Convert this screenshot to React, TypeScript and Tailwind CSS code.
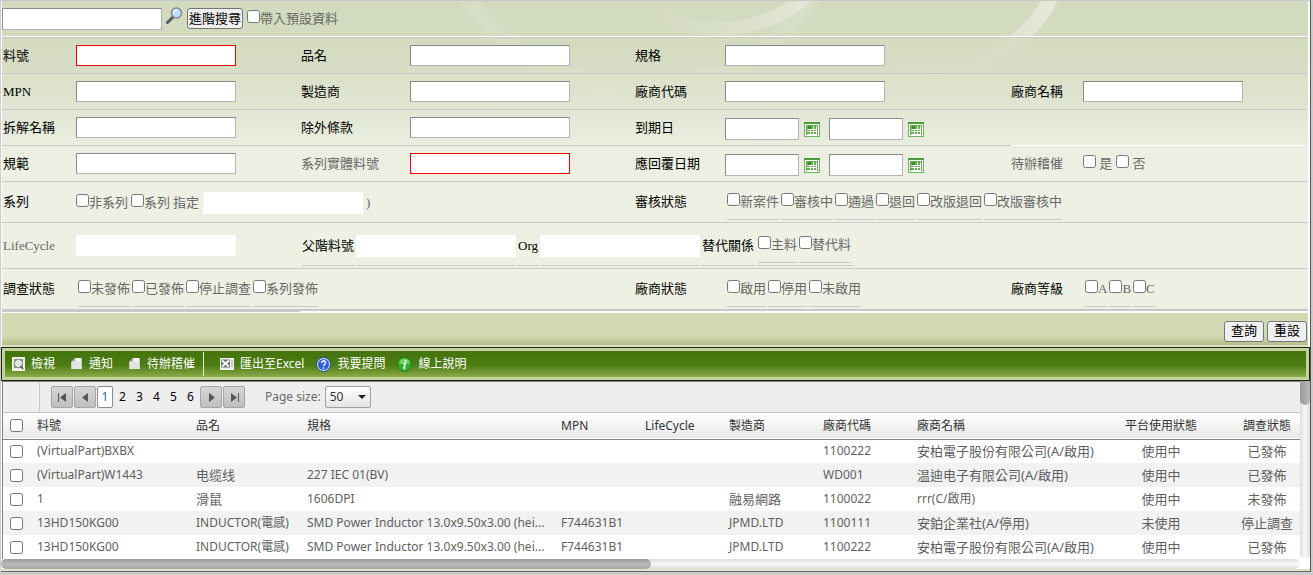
import type { ReactNode } from 'react';

import { clsx } from 'clsx';

const INPUT =
  'border border-t-[#8a8a8a] border-l-[#8a8a8a] border-r-[#b4b4b4] border-b-[#b4b4b4] bg-white px-1 text-[13px] text-black outline-none';
const INPUT_RED = 'border border-[#f00000] bg-white px-1 text-[13px] text-black outline-none';
const INPUT_PLAIN = 'bg-white px-1 text-[13px] text-black outline-none';
const ROW =
  'grid grid-cols-[74px_225fr_109px_225fr_90px_286fr_72px_225fr] items-center border-b border-[#c8c8c8]';
const BUTTON =
  'h-[21px] rounded-[3px] border border-[#767676] bg-[#efefef] px-px text-[13px] leading-4 text-black';

interface LabelProps {
  htmlFor?: string;
  muted?: boolean;
  children: ReactNode;
}

function Label({ htmlFor, muted = false, children }: LabelProps): ReactNode {
  return (
    <label
      htmlFor={htmlFor}
      className={clsx('whitespace-nowrap first:pl-px', muted ? 'text-[#696969]' : 'text-black')}
    >
      {children}
    </label>
  );
}

interface TextFieldProps {
  id: string;
  label: string;
  muted?: boolean;
  required?: boolean;
}

/** Label cell + input cell, two columns of the search grid. */
function TextField({ id, label, muted, required = false }: TextFieldProps): ReactNode {
  return (
    <>
      <Label htmlFor={id} muted={muted}>
        {label}
      </Label>
      <div>
        <input id={id} type="text" className={clsx('block h-[21px] w-40', required ? INPUT_RED : INPUT)} />
      </div>
    </>
  );
}

function CalendarIcon(): ReactNode {
  return (
    <svg viewBox="0 0 16 15" className="h-[15px] w-4" shapeRendering="crispEdges">
      <rect x="0.5" y="0.5" width="15" height="14" fill="#fff" stroke="#6db85c" />
      <rect x="0" y="0" width="16" height="2" fill="#4f9a3c" />
      <rect x="2" y="3" width="12" height="10" fill="#5fb04c" />
      <path
        d="M3 7h10M3 9.500h10M6.500 4v9M9.500 4v9M12.500 4v9M3 12h10"
        stroke="#fff"
        fill="none"
      />
      <rect x="4" y="4" width="3" height="3" fill="#3f8a2e" />
    </svg>
  );
}

function DateRange({ id, label }: { id: string; label: string }): ReactNode {
  return (
    <>
      <Label htmlFor={`${id}-from`}>{label}</Label>
      <div className="flex items-center pt-0.5">
        <input id={`${id}-from`} type="text" className={clsx('h-[22px] w-[74px]', INPUT)} />
        <button type="button" aria-label="calendar" className="mr-[9px] ml-[5px] pt-0.5">
          <CalendarIcon />
        </button>
        <input aria-label={label} type="text" className={clsx('h-[22px] w-[74px]', INPUT)} />
        <button type="button" aria-label="calendar" className="ml-[5px] pt-0.5">
          <CalendarIcon />
        </button>
      </div>
    </>
  );
}

function Check({ children, className }: { children: ReactNode; className?: string }): ReactNode {
  return (
    <label className={clsx('flex items-start leading-[18px] whitespace-nowrap text-[#696969]', className)}>
      <input type="checkbox" className="m-0 size-[13px]" />
      <span>{children}</span>
    </label>
  );
}

function CheckList({ items, className }: { items: string[]; className?: string }): ReactNode {
  return (
    <div className={clsx('flex gap-0.5', className)}>
      {items.map((item) => (
        <Check key={item} className="h-[27px] border-b border-[#c8c8c8]">
          {item}
        </Check>
      ))}
    </div>
  );
}

/** Pale rings behind the header and the first search rows. */
function Swirls(): ReactNode {
  return (
    <svg className="pointer-events-none absolute top-0 left-0 h-[120px] w-full" aria-hidden="true">
      <defs>
        <linearGradient id="fade" x1="0" x2="1">
          <stop offset="0.2" stopColor="#fff" stopOpacity="0" />
          <stop offset="0.6" stopColor="#fff" stopOpacity="0.2" />
          <stop offset="0.95" stopColor="#fff" stopOpacity="0.38" />
        </linearGradient>
      </defs>
      <g fill="none">
        <circle cx="718" cy="-102" r="130" stroke="url(#fade)" strokeWidth="14" />
        <circle cx="933" cy="-62" r="130" stroke="url(#fade)" strokeWidth="15" />
        <circle cx="638" cy="-125" r="212" stroke="#fff" strokeWidth="16" strokeOpacity="0.12" />
      </g>
    </svg>
  );
}

function MagnifierIcon(): ReactNode {
  return (
    <svg viewBox="0 0 17 17" className="size-[17px]">
      <path d="M1.5 15.5 7 10" stroke="#555b66" strokeWidth="3" strokeLinecap="round" />
      <circle cx="10.5" cy="6" r="5" fill="#bfe0fa" stroke="#7d8793" strokeWidth="1.5" />
      <path d="M7.5 5.5a3 3 0 0 1 3-2.7" stroke="#fff" strokeWidth="1.5" fill="none" />
    </svg>
  );
}

function SearchHeader(): ReactNode {
  return (
    <div className="flex h-[35px] items-center">
      <input aria-label="搜尋" type="text" className={clsx('h-[22px] w-40', INPUT)} />
      <button type="button" aria-label="搜尋" className="mr-1 ml-1 pb-1.5">
        <MagnifierIcon />
      </button>
      <button type="button" className={BUTTON}>
        進階搜尋
      </button>
      <Check className="ml-1">帶入預設資料</Check>
    </div>
  );
}

function SearchForm(): ReactNode {
  return (
    <form className="bg-[linear-gradient(#d4dcc0cc_0px,#d6dcc4cc_26px,#dde1cacc_36px,#e5eadacc_74px,#ebeee0_110px,#edf0e3_150px)]">
      <div className={clsx(ROW, 'h-9')}>
        <TextField id="part" label="料號" required />
        <TextField id="name" label="品名" />
        <TextField id="spec" label="規格" />
      </div>
      <div className={clsx(ROW, 'h-9')}>
        <TextField id="mpn" label="MPN" />
        <TextField id="maker" label="製造商" />
        <TextField id="vendor-code" label="廠商代碼" />
        <TextField id="vendor-name" label="廠商名稱" />
      </div>
      <div className={clsx(ROW, 'h-9')}>
        <TextField id="split" label="拆解名稱" />
        <TextField id="exempt" label="除外條款" />
        <DateRange id="due" label="到期日" />
        <div className="col-span-2 -mb-px h-9 self-end border-b border-white" />
      </div>
      <div className={clsx(ROW, 'h-9')}>
        <TextField id="rule" label="規範" />
        <TextField id="series-part" label="系列實體料號" muted required />
        <DateRange id="reply" label="應回覆日期" />
        <Label muted>待辦稽催</Label>
        <div className="flex gap-1">
          <Check>&nbsp;是</Check>
          <Check>&nbsp;否</Check>
        </div>
      </div>
      <div className={clsx(ROW, 'h-[41px]')}>
        <Label>系列</Label>
        <div className="col-span-3 flex items-center gap-[3px] pt-0.5 text-[#696969]">
          <Check>非系列</Check>
          <Check>系列</Check>
          <label htmlFor="series-name">指定</label>
          <input id="series-name" type="text" className={clsx('ml-px h-[22px] w-40', INPUT_PLAIN)} />
          <span>)</span>
        </div>
        <Label>審核狀態</Label>
        <CheckList
          className="col-span-3 self-end pb-0.5 pl-0.5"
          items={['新案件', '審核中', '通過', '退回', '改版退回', '改版審核中']}
        />
      </div>
      <div className={clsx(ROW, 'h-[46px]')}>
        <Label htmlFor="life" muted>
          LifeCycle
        </Label>
        <input id="life" type="text" className={clsx('h-[21px] w-40', INPUT_PLAIN)} />
        <div className="col-span-6 flex h-full items-end gap-0.5 pb-0.5 pl-px text-black">
          <label htmlFor="parent" className="flex h-10 items-center border-b border-[#c8c8c8]">
            父階料號
          </label>
          <div className="flex h-10 items-center border-b border-[#c8c8c8]">
            <input id="parent" type="text" className={clsx('h-[22px] w-40', INPUT_PLAIN)} />
          </div>
          <label htmlFor="org" className="flex h-10 items-center border-b border-[#c8c8c8]">
            Org
          </label>
          <div className="flex h-10 items-center border-b border-[#c8c8c8]">
            <input id="org" type="text" className={clsx('h-[22px] w-40', INPUT_PLAIN)} />
          </div>
          <span className="flex h-10 items-center border-b border-[#c8c8c8]">替代關係</span>
          <div className="flex h-10 items-end border-b border-[#c8c8c8] px-0.5 pb-0.5">
            <CheckList items={['主料', '替代料']} />
          </div>
        </div>
      </div>
      <div className={clsx(ROW, 'h-[42px] border-b-2')}>
        <Label>調查狀態</Label>
        <CheckList
          className="col-span-3 self-end pb-0.5 pl-0.5"
          items={['未發佈', '已發佈', '停止調查', '系列發佈']}
        />
        <Label>廠商狀態</Label>
        <CheckList className="self-end pb-0.5 pl-0.5" items={['啟用', '停用', '未啟用']} />
        <Label>廠商等級</Label>
        <CheckList className="self-end pb-0.5 pl-0.5" items={['A', 'B', 'C']} />
      </div>
      <div className="h-0.5 bg-white">
        <div className="h-px w-[298px] bg-[#c8c8c8]" />
      </div>
      <div className="flex h-[34px] items-center justify-end gap-[3px] border-b-2 border-[#dbe2c3] bg-[linear-gradient(#d2dab3_70%,#b5bf8b)] pt-1 pr-px">
        <button type="submit" className={clsx(BUTTON, 'w-10')}>
          查詢
        </button>
        <button type="reset" className={clsx(BUTTON, 'w-10')}>
          重設
        </button>
      </div>
    </form>
  );
}

function ViewIcon(): ReactNode {
  return (
    <svg viewBox="0 0 13 14" className="h-[14px] w-[13px]">
      <rect width="13" height="14" fill="#eef0ec" />
      <rect x="2" y="2" width="9" height="9" fill="#8b9186" />
      <circle cx="6.5" cy="6.5" r="3" fill="#dfe3dc" stroke="#fff" />
      <path d="m8.500 9 2.500 3" stroke="#555" strokeWidth="1.500" />
    </svg>
  );
}

function DocIcon(): ReactNode {
  return (
    <svg viewBox="0 0 12 13" className="h-[13px] w-3 pb-px">
      <path d="M4 0h7v12H0V4z" fill="#f2f3f0" />
      <path d="M4 0v4H0z" fill="#a7afa0" />
      <path d="M4 4h7v8H0V4z" fill="#e2e5df" />
    </svg>
  );
}

function ExcelIcon(): ReactNode {
  return (
    <svg viewBox="0 0 14 12" className="h-3 w-[14px]">
      <rect width="14" height="12" fill="#f2f3f0" />
      <rect x="1" y="1.500" width="9" height="8" fill="#6f776a" />
      <path d="m2 2.500 7 6M9 2.500l-7 6" stroke="#fff" strokeWidth="1.800" />
      <path d="M11 3h2M11 5.500h2M11 8h2" stroke="#8b9186" />
    </svg>
  );
}

function HelpIcon(): ReactNode {
  return (
    <svg viewBox="0 0 15 15" className="size-[15px]">
      <circle cx="7.500" cy="7.500" r="7" fill="#dce8fb" stroke="#16429a" />
      <circle cx="7.500" cy="7.500" r="5.500" fill="#2a62d2" />
      <path
        d="M5.500 6a2 2 0 1 1 3 1.600c-.7.400-1 .700-1 1.400M7.500 10.300v1.400"
        fill="none"
        stroke="#fff"
        strokeWidth="1.500"
      />
    </svg>
  );
}

function InfoIcon(): ReactNode {
  return (
    <svg viewBox="0 0 15 15" className="size-[15px]">
      <circle cx="7.500" cy="7.500" r="7" fill="#2fae2c" stroke="#1f7d1c" />
      <path d="M2 6a5.600 5.600 0 0 1 11 0c-3 1.500-8 1.500-11 0" fill="#6fd663" />
      <path d="M8.600 3v1.800M6.300 6.700h1.700l-.9 4.600h1.300" fill="none" stroke="#fff" strokeWidth="1.700" />
    </svg>
  );
}

function ToolButton({ icon, children }: { icon: ReactNode; children: ReactNode }): ReactNode {
  return (
    <button type="button" className="flex items-center gap-1.5 whitespace-nowrap">
      {icon}
      <span>{children}</span>
    </button>
  );
}

function Toolbar(): ReactNode {
  return (
    <div className="border border-[#1c2410] bg-[#c4d19e] p-[3px]">
      <div className="flex h-[26px] items-center bg-[linear-gradient(#43730a,#4c7d14_55%,#8cab4a)] pl-[7px] font-['Noto_Sans','Noto_Sans_CJK_TC',sans-serif] text-xs text-white">
        <div className="flex gap-4 pr-2">
          <ToolButton icon={<ViewIcon />}>檢視</ToolButton>
          <ToolButton icon={<DocIcon />}>通知</ToolButton>
          <ToolButton icon={<DocIcon />}>待辦稽催</ToolButton>
        </div>
        <div className="flex h-6 gap-3 border-l border-[#e3ead2] pl-4">
          <ToolButton icon={<ExcelIcon />}>匯出至Excel</ToolButton>
          <ToolButton icon={<HelpIcon />}>我要提問</ToolButton>
          <ToolButton icon={<InfoIcon />}>線上說明</ToolButton>
        </div>
      </div>
    </div>
  );
}

function PagerButton({ label, path }: { label: string; path: string }): ReactNode {
  return (
    <button
      type="button"
      aria-label={label}
      className="flex size-[22px] items-center justify-center rounded-[2px] border border-[#a5a5a5] bg-[linear-gradient(#d6d6d6,#bfbfbf)]"
    >
      <svg viewBox="0 0 9 9" className="size-[9px]">
        <path d={path} fill="#555" />
      </svg>
    </button>
  );
}

function Pager(): ReactNode {
  return (
    <div className="flex h-8 items-stretch border-t border-b border-l border-t-[#828282] border-b-[#c4c4c4] border-l-[#828282] bg-[#eee] text-xs">
      <div className="w-[37px] border-r border-[#c9c9c9]" />
      <div className="flex items-center gap-px pl-[11px]">
        <PagerButton label="First page" path="M0 0h1v9H0zM8 0v9L2 4.500z" />
        <PagerButton label="Previous page" path="M7 0v9L1 4.500z" />
        <span className="flex h-[22px] w-4 items-center justify-center rounded-[2px] border border-[#8c8c8c] bg-white text-[#2b6a8c]">
          1
        </span>
        <div className="flex">
          {['2', '3', '4', '5', '6'].map((page) => (
            <a key={page} href="#" className="w-[17px] text-center text-black">
              {page}
            </a>
          ))}
        </div>
        <PagerButton label="Next page" path="M2 0v9l6-4.500z" />
        <PagerButton label="Last page" path="M1 0v9l6-4.500zM8 0h1v9H8z" />
        <label htmlFor="page-size" className="pr-[3px] pl-[19px] text-[#696969]">
          Page size:
        </label>
        <div className="relative">
          <select
            id="page-size"
            defaultValue="50"
            className="block h-[22px] w-[46px] appearance-none rounded-[2px] border border-[#a0a0a0] bg-[linear-gradient(#fff,#e4e4e4)] pl-1 text-[#333]"
          >
            <option>20</option>
            <option>50</option>
          </select>
          <svg viewBox="0 0 8 4" className="pointer-events-none absolute top-[9px] right-[5px] h-1 w-2">
            <path d="M0 0h8L4 4z" fill="#222" />
          </svg>
        </div>
      </div>
    </div>
  );
}

interface Column {
  title: string;
  width: string;
  cell?: string;
}

const COLUMNS: Column[] = [
  { title: '料號', width: 'w-[159px]' },
  { title: '品名', width: 'w-[111px]' },
  { title: '規格', width: 'w-[254px]' },
  { title: 'MPN', width: 'w-[84px]' },
  { title: 'LifeCycle', width: 'w-[84px]' },
  { title: '製造商', width: 'w-[94px]' },
  { title: '廠商代碼', width: 'w-[94px]' },
  { title: '廠商名稱', width: 'w-[198px]' },
  { title: '平台使用狀態', width: 'w-[106px]', cell: 'text-center' },
  { title: '調查狀態', width: 'w-[106px]', cell: 'text-center' },
];

const SPEC = 'SMD Power Inductor 13.0x9.50x3.00 (hei...';

const ROWS: string[][] = [
  ['(VirtualPart)BXBX', '', '', '', '', '', '1100222', '安柏電子股份有限公司(A/啟用)', '使用中', '已發佈'],
  ['(VirtualPart)W1443', '电缆线', '227 IEC 01(BV)', '', '', '', 'WD001', '温迪电子有限公司(A/啟用)', '使用中', '已發佈'],
  ['1', '滑鼠', '1606DPI', '', '', '融易網路', '1100022', 'rrr(C/啟用)', '使用中', '未發佈'],
  ['13HD150KG00', 'INDUCTOR(電感)', SPEC, 'F744631B1', '', 'JPMD.LTD', '1100111', '安鉑企業社(A/停用)', '未使用', '停止調查'],
  ['13HD150KG00', 'INDUCTOR(電感)', SPEC, 'F744631B1', '', 'JPMD.LTD', '1100222', '安柏電子股份有限公司(A/啟用)', '使用中', '已發佈'],
];

// Values that start with a Han character are set a size larger than the codes
const startsWithHan = (value: string): boolean => /^[\u4e00-\u9fff]/.test(value);

function PartsTable(): ReactNode {
  return (
    <div className="overflow-hidden border-l border-[#828282]">
      <table className="w-[1317px] table-fixed border-collapse whitespace-nowrap">
        <thead>
          <tr className="h-[26px] border-b border-[#828282] bg-[linear-gradient(#fff,#e8e8e8)] text-left text-xs text-[#333]">
            <th className="w-[27px] pl-[7px]">
              <input type="checkbox" aria-label="Select all" className="m-0 block size-[13px]" />
            </th>
            {COLUMNS.map((col) => (
              <th key={col.title} className={clsx('px-[7px] font-normal', col.width, col.cell)}>
                {col.title}
              </th>
            ))}
          </tr>
        </thead>
        <tbody>
          {ROWS.map((row, i) => (
            <tr key={i} className="h-6 bg-white leading-4 text-[#5f5f5f] even:bg-[#f2f2f2]">
              <td className="pl-[7px]">
                <input type="checkbox" aria-label={row[0]} className="m-0 block size-[13px]" />
              </td>
              {COLUMNS.map((col, c) => (
                <td
                  key={col.title}
                  className={clsx('px-[7px]', col.cell, startsWithHan(row[c]) ? 'text-[13px] leading-4' : 'text-xs')}
                >
                  {row[c]}
                </td>
              ))}
            </tr>
          ))}
        </tbody>
      </table>
    </div>
  );
}

function PartsGrid(): ReactNode {
  return (
    <div className="font-['Noto_Sans','Noto_Sans_CJK_TC',sans-serif]">
      <div className="flex">
        <div className="min-w-0 flex-1 pl-px">
          <Pager />
          <PartsTable />
        </div>
        <div className="w-[10px] rounded-b-[5px] bg-[linear-gradient(to_right,#dedede,#f8f8f8,#dedede)]">
          <div className="h-6 rounded-b-[5px] bg-[linear-gradient(to_right,#9a9a9a,#b8b8b8)]" />
        </div>
      </div>
      <div className="mr-[10px] h-[10px] rounded-[5px] bg-[linear-gradient(#dedede,#f8f8f8,#dedede)]">
        <div className="h-full w-1/2 rounded-[5px] bg-[linear-gradient(#9a9a9a,#b8b8b8_50%,#a8a8a8)]" />
      </div>
    </div>
  );
}

export default function App(): ReactNode {
  return (
    <main className="min-h-screen bg-[#ccc] pr-0.5 pl-px font-['Liberation_Serif','Noto_Sans_CJK_TC',serif] text-[13px] leading-[18px]">
      <div className="border-t border-r border-b border-t-[#c8c8c8] border-r-[#555] border-b-[#666] bg-white">
        <div className="relative mr-0.5 ml-px bg-[#d2dabf]">
          <Swirls />
          <div className="relative">
            <SearchHeader />
            <div className="h-0.5 border-t border-b border-t-white border-b-[#c8c8c8]" />
            <SearchForm />
          </div>
        </div>
        <Toolbar />
        <PartsGrid />
        <div className="h-0.5 bg-[#dfe6c9]" />
      </div>
    </main>
  );
}
